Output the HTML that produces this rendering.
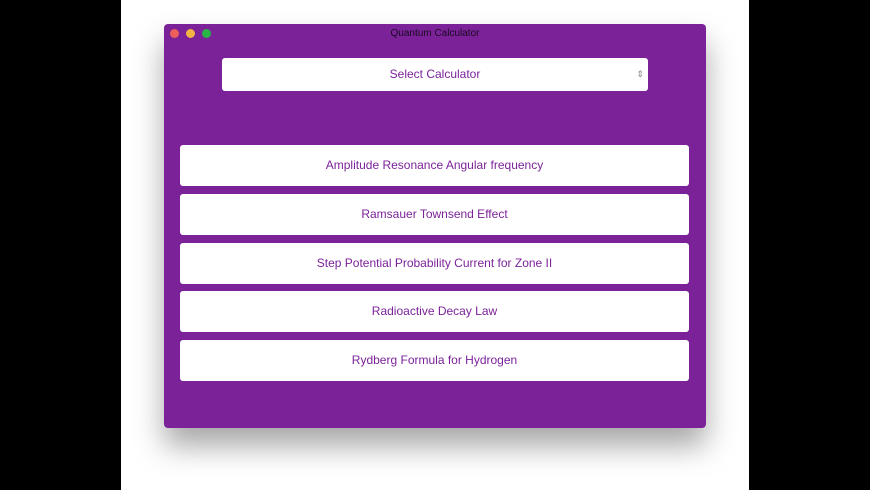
<!DOCTYPE html><html><head><style>
body{margin:0;width:870px;height:490px;background:#000;position:relative;overflow:hidden;font-family:"Liberation Sans",sans-serif}
.bg{position:absolute;left:121px;top:0;width:628px;height:490px;background:#fff}
.win{position:absolute;left:164px;top:24px;width:542px;height:404px;background:#7b2299;border-radius:4px;box-shadow:0 18px 30px rgba(0,0,0,.35)}
.title{position:absolute;top:4px;width:100%;text-align:center;font-size:10px;color:#1a0a20}
.dot{position:absolute;top:5px;width:9px;height:9px;border-radius:50%}
.sel{position:absolute;left:58px;top:34px;width:426px;height:33px;background:#fff;border-radius:3px;text-align:center;line-height:33px;font-size:12px;color:#7b2299}
.sel span{position:absolute;right:4px;top:0;font-size:9px;color:#888}
.b{position:absolute;left:16px;width:509px;height:41px;background:#fff;border-radius:3px;text-align:center;line-height:41px;font-size:12px;color:#7b2299}
</style></head><body><div class="bg"></div>
<div class="win"><div class="dot" style="left:6px;background:#ec5f5a"></div><div class="dot" style="left:22px;background:#f3b244"></div><div class="dot" style="left:38px;background:#28b446"></div>
<div class="title">Quantum Calculator</div>
<div class="sel">Select Calculator<span>⇕</span></div>
<div class="b" style="top:121px">Amplitude Resonance Angular frequency</div>
<div class="b" style="top:170px">Ramsauer Townsend Effect</div>
<div class="b" style="top:219px">Step Potential Probability Current for Zone II</div>
<div class="b" style="top:267px">Radioactive Decay Law</div>
<div class="b" style="top:316px">Rydberg Formula for Hydrogen</div>
</div></body></html>
